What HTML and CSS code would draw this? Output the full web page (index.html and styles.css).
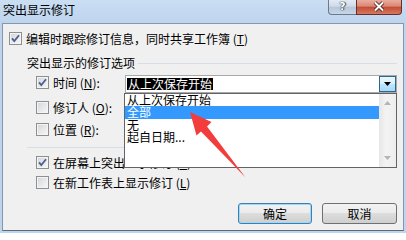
FILE: index.html
```html
<!DOCTYPE html>
<html lang="zh-CN">
<head>
<meta charset="utf-8">
<title>突出显示修订</title>
<link rel="stylesheet" href="styles.css">
</head>
<body>
<div class="window">
  <div class="titlebar">
    <div class="title">突出显示修订</div>
    <div class="caption-btns">
      <div class="cap-help">?</div>
      <div class="cap-close">
        <svg width="12" height="11" viewBox="0 0 12 11"><path class="x-out" d="M2 1.5 10 9.5M10 1.5 2 9.5"/><path class="x-in" d="M2 1.5 10 9.5M10 1.5 2 9.5"/></svg>
      </div>
    </div>
  </div>
  <div class="client">
    <div class="row">
      <span class="cb"><svg class="tick" viewBox="0 0 11 11"><path d="M2 5.3 4.3 8 9 2.2"/></svg></span>
      <span class="lbl">编辑时跟踪修订信息，同时共享工作簿 (<u>T</u>)</span>
    </div>
    <div class="group-head">
      <span class="group-title">突出显示的修订选项</span>
      <span class="rule"></span>
    </div>
    <div class="row sub time-row">
      <span class="cb"><svg class="tick" viewBox="0 0 11 11"><path d="M2 5.3 4.3 8 9 2.2"/></svg></span>
      <span class="lbl field-lbl">时间 (<u>N</u>):</span>
      <div class="combo">
        <span class="combo-text">从上次保存开始</span>
        <span class="combo-btn"><svg width="7" height="4" viewBox="0 0 7 4"><path d="M0 0H7L3.5 4Z"/></svg></span>
        <div class="listbox">
          <ul class="items">
            <li>从上次保存开始</li>
            <li class="sel">全部</li>
            <li>无</li>
            <li>起自日期...</li>
          </ul>
          <div class="vscroll">
            <svg width="7" height="4" viewBox="0 0 7 4"><path d="M0 4H7L3.5 0Z"/></svg>
            <svg width="7" height="4" viewBox="0 0 7 4"><path d="M0 0H7L3.5 4Z"/></svg>
          </div>
        </div>
      </div>
    </div>
    <div class="row sub r2">
      <span class="cb"></span>
      <span class="lbl">修订人 (<u>O</u>):</span>
    </div>
    <div class="row sub r3">
      <span class="cb"></span>
      <span class="lbl">位置 (<u>R</u>):</span>
    </div>
    <div class="sep"></div>
    <div class="row sub r4">
      <span class="cb"><svg class="tick" viewBox="0 0 11 11"><path d="M2 5.3 4.3 8 9 2.2"/></svg></span>
      <span class="lbl">在屏幕上突出显示修订 (<u>S</u>)</span>
    </div>
    <div class="row sub r5">
      <span class="cb"></span>
      <span class="lbl">在新工作表上显示修订 (<u>L</u>)</span>
    </div>
    <div class="buttons">
      <button class="btn btn-ok">确定</button>
      <button class="btn btn-cancel">取消</button>
    </div>
  </div>
  <svg class="annot-arrow" width="406" height="233" viewBox="0 0 406 233">
    <polygon points="190,112 211.5,122 207,126.5 245.5,177.5 201,131.5 196.5,135.5"/>
  </svg>
</div>
</body>
</html>
```

FILE: styles.css
```css
body {
  margin: 0;
  background: #ffffff;
}

.window {
  position: relative;
  width: 406px;
  height: 233px;
  background: #bfd4ed;
  font-family: "Noto Sans CJK SC", "Noto Sans", sans-serif;
  font-size: 12px;
  color: #000000;
  overflow: hidden;
}

/* ---------- title bar ---------- */
.titlebar {
  display: flex;
  height: 23px;
  background: linear-gradient(#cadef3, #bed4ee);
}

.title {
  padding: 3px 0 0 3px;
  line-height: 14px;
  color: #000000;
}

.caption-btns {
  display: flex;
  margin-left: auto;
  margin-right: 4px;
  height: 15px;
}

.cap-help {
  width: 28px;
  height: 15px;
  box-sizing: border-box;
  border: 1px solid #6b7a8e;
  border-top: none;
  border-right: none;
  border-radius: 0 0 0 4px;
  background: linear-gradient(#e3eaf3 0%, #cfdae7 45%, #b6c6d9 50%, #c8d6e6 100%);
  color: #ffffff;
  font-family: "DejaVu Sans", sans-serif;
  font-weight: bold;
  font-size: 11px;
  line-height: 13px;
  text-align: center;
  text-shadow: 0 0 1px #2b3a4d, 0 0 1px #2b3a4d, 1px 0 1px #2b3a4d;
}

.cap-close {
  display: flex;
  align-items: center;
  justify-content: center;
  width: 46px;
  height: 15px;
  box-sizing: border-box;
  border: 1px solid #6a2e28;
  border-top: none;
  border-radius: 0 0 4px 0;
  background: linear-gradient(#e9ad9f 0%, #d98672 45%, #c54a32 50%, #d27a62 100%);
}

.cap-close svg {
  margin-top: -1px;
}

.x-out {
  fill: none;
  stroke: #3c1c18;
  stroke-width: 3.6;
}

.x-in {
  fill: none;
  stroke: #ffffff;
  stroke-width: 2;
}

/* ---------- client area ---------- */
.client {
  height: 208px;
  margin: 0 2px;
  box-sizing: border-box;
  border: 1px solid #8597ad;
  border-bottom-color: #5a687a;
  background: #f0f0f0;
  padding: 8px 6px 0 6px;
}

.row {
  display: flex;
  align-items: center;
  height: 13px;
  line-height: 13px;
  white-space: nowrap;
}

.sub {
  padding-left: 27px;
}

.cb {
  position: relative;
  flex: none;
  width: 13px;
  height: 13px;
  box-sizing: border-box;
  margin-right: 4px;
  border: 1px solid #8e8f8f;
  background: linear-gradient(135deg, #d2d4d8 0%, #e6e7e9 50%, #f8f8f8 100%);
  box-shadow: inset 0 0 0 1px #f4f4f4;
}

.tick {
  position: absolute;
  left: 0;
  top: 0;
  width: 11px;
  height: 11px;
}

.tick path {
  fill: none;
  stroke: #4b5f90;
  stroke-width: 1.8;
}

.group-head {
  display: flex;
  align-items: center;
  height: 14px;
  line-height: 14px;
  margin-top: 11px;
  padding-left: 18px;
  white-space: nowrap;
}

.rule {
  flex: 1;
  height: 1px;
  margin-left: 3px;
  background: #d5dfe5;
}

.time-row {
  height: 18px;
  align-items: flex-start;
  margin-top: 5px;
}

.time-row .cb {
  margin-top: 1px;
}

.field-lbl {
  width: 72px;
  margin-top: 1px;
}

.r2 {
  margin-top: 8px;
}

.r3 {
  margin-top: 9px;
}

.sep {
  height: 1px;
  margin: 11px 0 0 18px;
  background: #d5dfe5;
}

.r4 {
  margin-top: 8px;
}

.r5 {
  margin-top: 7px;
}

/* ---------- combo box ---------- */
.combo {
  position: relative;
  display: flex;
  align-items: flex-start;
  width: 272px;
  height: 18px;
  box-sizing: border-box;
  border: 1px solid #a7a9ad;
  background: #ffffff;
}

.combo-text {
  margin: 2px 0 0 1px;
  padding: 0 1px;
  height: 12px;
  line-height: 12px;
  background: #000000;
  color: #ffffff;
}

.combo-btn {
  display: flex;
  align-items: center;
  justify-content: center;
  margin-left: auto;
  width: 17px;
  height: 16px;
  box-sizing: border-box;
  border: 1px solid #2f6690;
  background: linear-gradient(#eaf6fd 0%, #d9f0fc 50%, #bee6fd 50%, #a7d9f5 100%);
}

.combo-btn path {
  fill: #000000;
}

.listbox {
  position: absolute;
  left: -2px;
  top: 17px;
  display: flex;
  width: 273px;
  height: 75px;
  box-sizing: border-box;
  border: 1px solid #646464;
  background: #ffffff;
}

.items {
  flex: 1;
  list-style: none;
  margin: 0;
  padding: 0;
}

.items li {
  height: 12.3px;
  line-height: 12.3px;
  padding-left: 2px;
  white-space: nowrap;
}

.items li.sel {
  background: #3399ff;
  color: #ffffff;
}

.vscroll {
  display: flex;
  flex-direction: column;
  justify-content: space-between;
  align-items: center;
  width: 17px;
  padding: 7px 0 7px 0;
  box-sizing: border-box;
  background: linear-gradient(90deg, #e6e6e6, #f3f3f3 40%, #eeeeee);
}

.vscroll path {
  fill: #b4b4b4;
}

/* ---------- buttons ---------- */
.buttons {
  display: flex;
  justify-content: flex-end;
  gap: 10px;
  margin-top: 14px;
}

.btn {
  height: 21px;
  padding: 0;
  box-sizing: border-box;
  border: 1px solid #707070;
  border-radius: 3px;
  background: linear-gradient(#f2f2f2 0%, #ebebeb 50%, #dddddd 50%, #cfcfcf 100%);
  font-family: "Noto Sans CJK SC", "Noto Sans", sans-serif;
  font-size: 12px;
  line-height: 19px;
  color: #000000;
}

.btn-ok {
  width: 74px;
  border-color: #3c7fb1;
  box-shadow: inset 0 0 0 1px #9fd8f7;
}

.btn-cancel {
  width: 75px;
}

/* ---------- annotation ---------- */
.annot-arrow {
  position: absolute;
  left: 0;
  top: 0;
  pointer-events: none;
}

.annot-arrow polygon {
  fill: #f33c3c;
}
```
